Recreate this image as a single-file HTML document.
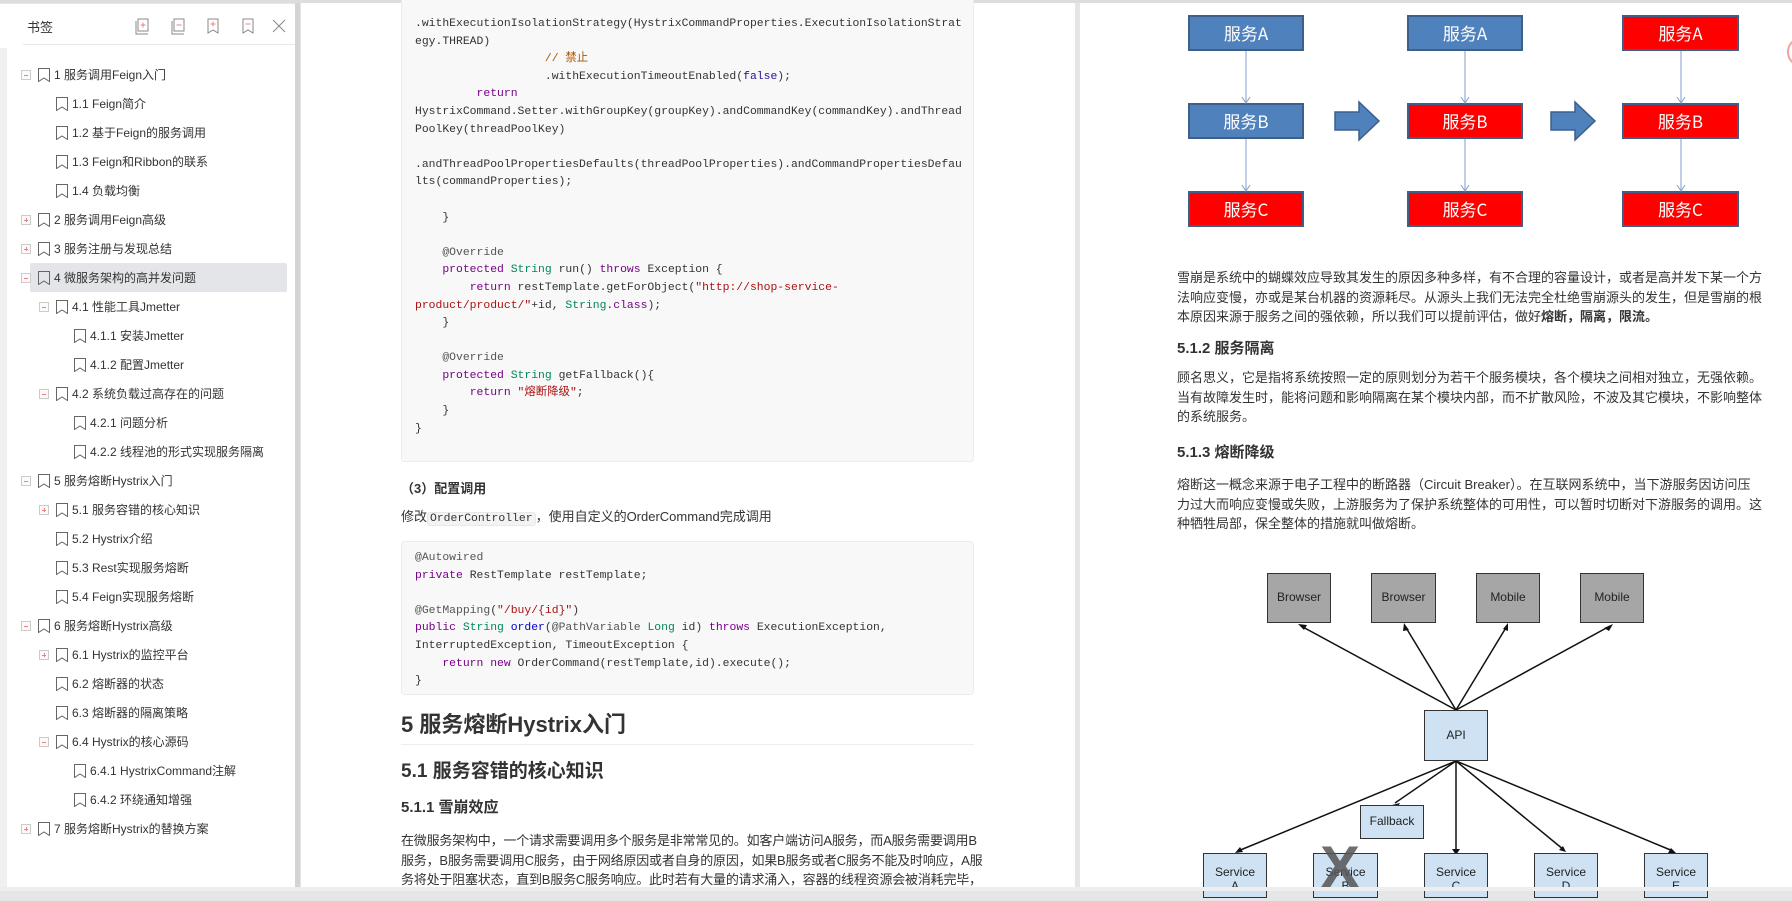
<!DOCTYPE html>
<html><head><meta charset="utf-8"><style>
*{margin:0;padding:0;box-sizing:border-box}
body{width:1792px;height:891px;overflow:hidden;background:#e6e6e6;font-family:"Liberation Sans","Noto Sans CJK SC",sans-serif;color:#333;position:relative}
.a{position:absolute}
#side{left:0;top:4px;width:295px;height:883px;background:#fff}
.strip{left:0;top:44px;width:7px;height:843px;background:#f0f0f0}
.it{position:absolute;font-size:12px;line-height:16px;white-space:nowrap;color:#333}
.bm{position:absolute;width:12px;height:14px}
.ex{position:absolute;width:10px;height:10px;border:1px solid #ccc;background:#fafafa}
.ex:after{content:"";position:absolute;left:2px;top:3.5px;width:4px;height:1px;background:#f08080}
.ex.p:before{content:"";position:absolute;left:3.5px;top:2px;width:1px;height:4px;background:#f08080}
.page{background:#fff}
.code{position:absolute;background:#f8f8f8;border:1px solid #ececec;border-radius:3px}
pre{font-family:"Liberation Mono","Noto Sans CJK SC",monospace;font-size:11.4px;line-height:17.6px;color:#333;position:absolute;left:13px}
.k{color:#770088}.t{color:#008855}.s{color:#aa1111}.c{color:#aa5500}.n{color:#555}.b{color:#221199}.f{color:#0000cc}
.p13{position:absolute;font-size:13px;line-height:19.5px;color:#333}
.box{position:absolute;border:2px solid #3e5f8a;color:#fff;font-size:17px;text-align:center;font-family:"Noto Sans CJK SC",sans-serif}
.bl{background:#4f81bd}.rd{background:#ff0000}
.g{position:absolute;background:#a6a6a6;border:1.5px solid #333;font-size:12px;color:#222;text-align:center}
.lb{position:absolute;background:#cfe2f3;border:1.5px solid #333;font-size:12px;color:#222;text-align:center}
</style></head><body>
<div class="a" style="left:0;top:0;width:1792px;height:3px;background:#ddd"></div>
<div class="a" id="side">
<div class="a strip"></div>
<div class="a" style="left:27px;top:13px;font-size:13px;color:#333">书签</div>
<svg class="a" style="left:130px;top:8px" width="165" height="30" viewBox="0 0 165 30">
<g fill="none" stroke="#888" stroke-width="1">
<path d="M6 9v13h12M8 7h10v12H8z"/><path d="M42 9v13h12M44 7h10v12H44z"/>
<path d="M78 7h10v14l-5-3-5 3z"/><path d="M113 7h10v14l-5-3-5 3z"/>
<path d="M143 8l12 12M155 8l-12 12"/></g>
<g stroke="#f08080" stroke-width="1"><path d="M10.5 13h5M13 10.5v5M46.5 13h5M80.5 12h5M83 9.5v5M115.5 12h5"/></g>
</svg>
<div class="a" style="left:23px;top:40px;width:272px;height:1px;background:#e8e8e8"></div>
<div class="a" style="left:30px;top:259px;width:257px;height:29px;background:#e3e5e8;border-radius:2px"></div>
</div>
<div class="a" style="left:295px;top:3px;width:5px;height:884px;background:#d4d4d4"></div>
<div id="tree"></div>

<!-- left page -->
<div class="a page" style="left:301px;top:3px;width:774px;height:884px"></div>
<div class="code" style="left:401px;top:-3px;width:573px;height:465px">
<pre style="top:18px">.withExecutionIsolationStrategy(HystrixCommandProperties.ExecutionIsolationStrat
egy.THREAD)
                   <span class="c">// 禁止</span>
                   .withExecutionTimeoutEnabled(<span class="b">false</span>);
         <span class="k">return</span>
HystrixCommand.Setter.withGroupKey(groupKey).andCommandKey(commandKey).andThread
PoolKey(threadPoolKey)

.andThreadPoolPropertiesDefaults(threadPoolProperties).andCommandPropertiesDefau
lts(commandProperties);

    }

    <span class="n">@Override</span>
    <span class="k">protected</span> <span class="t">String</span> run() <span class="k">throws</span> Exception {
        <span class="k">return</span> restTemplate.getForObject(<span class="s">"http://shop-service-
product/product/"</span>+id, <span class="t">String</span>.<span class="k">class</span>);
    }

    <span class="n">@Override</span>
    <span class="k">protected</span> <span class="t">String</span> getFallback(){
        <span class="k">return</span> <span class="s">"熔断降级"</span>;
    }
}</pre></div>
<div class="a" style="left:401px;top:478px;font-size:13px;font-weight:bold">（3）配置调用</div>
<div class="p13" style="left:401px;top:507px">修改<span style="font-family:'Liberation Mono',monospace;font-size:11.4px;background:#f3f3f3;border:1px solid #e8e8e8;border-radius:3px;padding:0 2px">OrderController</span>，使用自定义的OrderCommand完成调用</div>
<div class="code" style="left:401px;top:541px;width:573px;height:154px">
<pre style="top:8px"><span class="n">@Autowired</span>
<span class="k">private</span> RestTemplate restTemplate;

<span class="n">@GetMapping</span>(<span class="s">"/buy/{id}"</span>)
<span class="k">public</span> <span class="t">String</span> <span class="f">order</span>(<span class="n">@PathVariable</span> <span class="t">Long</span> id) <span class="k">throws</span> ExecutionException,
InterruptedException, TimeoutException {
    <span class="k">return</span> <span class="k">new</span> OrderCommand(restTemplate,id).execute();
}</pre></div>
<div class="a" style="left:401px;top:710px;font-size:22px;font-weight:bold;line-height:30px">5 服务熔断Hystrix入门</div>
<div class="a" style="left:401px;top:744px;width:573px;height:1px;background:#eee"></div>
<div class="a" style="left:401px;top:759px;font-size:19px;font-weight:bold;line-height:26px">5.1 服务容错的核心知识</div>
<div class="a" style="left:401px;top:798px;font-size:15px;font-weight:bold;line-height:20px">5.1.1 雪崩效应</div>
<div class="p13" style="left:401px;top:831px;width:600px;letter-spacing:-0.2px">在微服务架构中，一个请求需要调用多个服务是非常常见的。如客户端访问A服务，而A服务需要调用B<br>服务，B服务需要调用C服务，由于网络原因或者自身的原因，如果B服务或者C服务不能及时响应，A服<br>务将处于阻塞状态，直到B服务C服务响应。此时若有大量的请求涌入，容器的线程资源会被消耗完毕，</div>

<!-- right page -->
<div class="a page" style="left:1080px;top:3px;width:712px;height:884px"></div>
<div class="box bl" style="left:1188px;top:15px;width:116px;height:36px;line-height:32px">服务A</div>
<div class="box bl" style="left:1188px;top:103px;width:116px;height:36px;line-height:32px">服务B</div>
<div class="box rd" style="left:1188px;top:191px;width:116px;height:36px;line-height:32px">服务C</div>
<div class="box bl" style="left:1407px;top:15px;width:116px;height:36px;line-height:32px">服务A</div>
<div class="box rd" style="left:1407px;top:103px;width:116px;height:36px;line-height:32px">服务B</div>
<div class="box rd" style="left:1407px;top:191px;width:116px;height:36px;line-height:32px">服务C</div>
<div class="box rd" style="left:1622px;top:15px;width:117px;height:36px;line-height:32px">服务A</div>
<div class="box rd" style="left:1622px;top:103px;width:117px;height:36px;line-height:32px">服务B</div>
<div class="box rd" style="left:1622px;top:191px;width:117px;height:36px;line-height:32px">服务C</div>
<svg class="a" style="left:1080px;top:0" width="712" height="240">
<g stroke="#7f9fcf" stroke-width="1" fill="none">
<path d="M166 51v52M166 139v52M385 51v52M385 139v52M601 51v52M601 139v52"/>
<path d="M162 97l4 6 4-6M162 185l4 6 4-6M381 97l4 6 4-6M381 185l4 6 4-6M597 97l4 6 4-6M597 185l4 6 4-6"/></g>
<path d="M255 112h24v-10l20 19-20 19v-10h-24z" fill="#4f81bd" stroke="#3e5f8a" stroke-width="1.5"/>
<path d="M471 112h24v-10l20 19-20 19v-10h-24z" fill="#4f81bd" stroke="#3e5f8a" stroke-width="1.5"/>
<circle cx="722" cy="52" r="14" fill="none" stroke="#f4a0a0" stroke-width="2"/>
</svg>
<div class="p13" style="left:1177px;top:268px;width:585px">雪崩是系统中的蝴蝶效应导致其发生的原因多种多样，有不合理的容量设计，或者是高并发下某一个方法响应变慢，亦或是某台机器的资源耗尽。从源头上我们无法完全杜绝雪崩源头的发生，但是雪崩的根本原因来源于服务之间的强依赖，所以我们可以提前评估，做好<b>熔断，隔离，限流。</b></div>
<div class="a" style="left:1177px;top:339px;font-size:15px;font-weight:bold;line-height:20px">5.1.2 服务隔离</div>
<div class="p13" style="left:1177px;top:368px;width:585px">顾名思义，它是指将系统按照一定的原则划分为若干个服务模块，各个模块之间相对独立，无强依赖。当有故障发生时，能将问题和影响隔离在某个模块内部，而不扩散风险，不波及其它模块，不影响整体的系统服务。</div>
<div class="a" style="left:1177px;top:443px;font-size:15px;font-weight:bold;line-height:20px">5.1.3 熔断降级</div>
<div class="p13" style="left:1177px;top:475px;width:585px">熔断这一概念来源于电子工程中的断路器（Circuit Breaker）。在互联网系统中，当下游服务因访问压力过大而响应变慢或失败，上游服务为了保护系统整体的可用性，可以暂时切断对下游服务的调用。这种牺牲局部，保全整体的措施就叫做熔断。</div>

<svg class="a" style="left:1180px;top:560px" width="560" height="331">
<g stroke="#111" stroke-width="1.5" fill="none">
<path d="M276 150L121 66M276 150L225 66M276 150L327 66M276 150L430 66"/>
<path d="M276 201L58 291M276 201L215 243M276 201V290M276 201L384 290M276 201L493 291"/>
</g>
<g fill="#111">
<path d="M118 64l9 1-3 5z"/><path d="M224 63l5 7-6 1z"/><path d="M328 63l0 8-5-2z"/><path d="M433 64l-4 7-5-3z"/>
<path d="M212 245l8-2-3 5z"/><path d="M272 289h8l-4 6z"/><path d="M386 292l-7-2 4-4z"/><path d="M496 293l-8 0 3-5z"/><path d="M55 293l5-6 3 5z"/>
</g>
</svg>
<div class="g" style="left:1267px;top:573px;width:64px;height:50px;line-height:47px">Browser</div>
<div class="g" style="left:1371px;top:573px;width:65px;height:50px;line-height:47px">Browser</div>
<div class="g" style="left:1476px;top:573px;width:64px;height:50px;line-height:47px">Mobile</div>
<div class="g" style="left:1580px;top:573px;width:64px;height:50px;line-height:47px">Mobile</div>
<div class="lb" style="left:1424px;top:710px;width:64px;height:51px;line-height:48px">API</div>
<div class="lb" style="left:1360px;top:805px;width:64px;height:34px;line-height:31px">Fallback</div>
<div class="lb" style="left:1203px;top:853px;width:64px;height:45px;line-height:14px;padding-top:11px">Service<br>A</div>
<div class="lb" style="left:1313px;top:853px;width:65px;height:45px;line-height:14px;padding-top:11px">Service<br>B</div>
<div class="lb" style="left:1424px;top:853px;width:64px;height:45px;line-height:14px;padding-top:11px">Service<br>C</div>
<div class="lb" style="left:1534px;top:853px;width:64px;height:45px;line-height:14px;padding-top:11px">Service<br>D</div>
<div class="lb" style="left:1644px;top:853px;width:64px;height:45px;line-height:14px;padding-top:11px">Service<br>E</div>
<div class="a" style="left:1320px;top:838px;font-size:60px;font-weight:bold;color:#555;opacity:.85;line-height:60px">X</div>
<div class="a" style="left:0;top:887px;width:1792px;height:4px;background:#eee"></div>

<script>
var items=[[1,"1 服务调用Feign入门","m"],[2,"1.1 Feign简介"],[2,"1.2 基于Feign的服务调用"],[2,"1.3 Feign和Ribbon的联系"],[2,"1.4 负载均衡"],[1,"2 服务调用Feign高级","p"],[1,"3 服务注册与发现总结","p"],[1,"4 微服务架构的高并发问题","m"],[2,"4.1 性能工具Jmetter","m"],[3,"4.1.1 安装Jmetter"],[3,"4.1.2 配置Jmetter"],[2,"4.2 系统负载过高存在的问题","m"],[3,"4.2.1 问题分析"],[3,"4.2.2 线程池的形式实现服务隔离"],[1,"5 服务熔断Hystrix入门","m"],[2,"5.1 服务容错的核心知识","p"],[2,"5.2 Hystrix介绍"],[2,"5.3 Rest实现服务熔断"],[2,"5.4 Feign实现服务熔断"],[1,"6 服务熔断Hystrix高级","m"],[2,"6.1 Hystrix的监控平台","p"],[2,"6.2 熔断器的状态"],[2,"6.3 熔断器的隔离策略"],[2,"6.4 Hystrix的核心源码","m"],[3,"6.4.1 HystrixCommand注解"],[3,"6.4.2 环绕通知增强"],[1,"7 服务熔断Hystrix的替换方案","p"]];
var h="";
items.forEach(function(it,i){var y=75+i*29,l=it[0],bx=38+(l-1)*18;
if(it[2])h+='<div class="ex '+(it[2]=="p"?"p":"")+'" style="left:'+(bx-17)+'px;top:'+(y-5)+'px"></div>';
h+='<svg class="bm" style="left:'+bx+'px;top:'+(y-7)+'px" viewBox="0 0 12 14"><path d="M0.5 0.5h11v13l-5.5-3.5-5.5 3.5z" fill="none" stroke="#666"/></svg>';
h+='<div class="it" style="left:'+(bx+16)+'px;top:'+(y-8)+'px">'+it[1]+'</div>';});
document.getElementById("tree").innerHTML=h;
</script>
</body></html>
